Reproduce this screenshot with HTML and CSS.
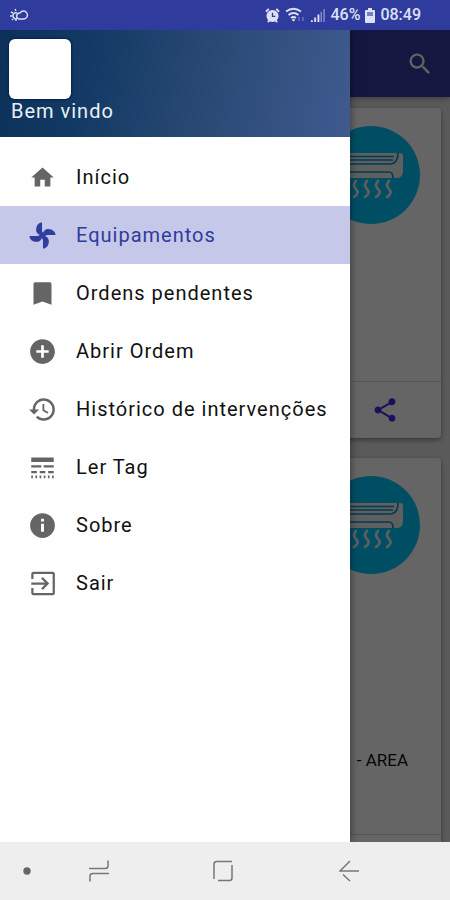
FILE: index.html
```html
<!DOCTYPE html>
<html lang="pt">
<head>
<meta charset="utf-8">
<meta name="viewport" content="width=device-width, initial-scale=1">
<title>Equipamentos</title>
<link rel="stylesheet" href="styles.css">
</head>
<body>
<svg class="defs" aria-hidden="true">
  <symbol id="aircon" viewBox="0 0 98 98">
    <circle cx="49" cy="49" r="49" fill="#00c3fa"/>
    <path d="M16 27H78Q81 27 81 30V45Q81 52 75 52H22Q16 52 16 46Z" fill="#ededed"/>
    <path d="M16 30.500H72M16 34H71M16 38H69Q76 37 76 27M16 46H67Q71 46 71 52" fill="none" stroke="#0098c8" stroke-width="1.700"/>
    <path d="M32 55q-4 4 0 8t-2 8M43 55q-4 4 0 8t-2 8M54 55q-4 4 0 8t-2 8M65 55q-4 4 0 8t-2 8" transform="translate(2 0)" fill="none" stroke="#ededed" stroke-width="2.600" stroke-linecap="round"/>
  </symbol>
</svg>
<div class="screen">
  <div class="status">
    <svg class="weather" viewBox="0 0 20 14" fill="none" stroke="currentColor" stroke-width="1.400">
      <path d="M8 10.500a3 3 0 0 1 2-5.500a4 4 0 1 1 4 6H8"/><path d="M7 5a3 3 0 1 0 1 5M1 4l2 1M0 8h2M2 12l1-1M6 13v-2M5 1l1 2"/>
    </svg>
    <div class="indicators">
      <svg class="alarm" viewBox="0 0 16 16"><circle cx="8" cy="8.500" r="6.500" fill="currentColor"/><path d="M1 4l3-3M15 4l-3-3M3 15l2-2M13 15l-2-2" stroke="currentColor" stroke-width="2"/><path d="M8 5v4h3" fill="none" stroke="#303b9e" stroke-width="1.400"/></svg>
      <svg class="wifi" viewBox="0 0 20 16"><path d="M1 4.500Q8.500-1 16 4.500M3.500 8Q8.500 4 13.500 8M6 11Q8.500 9 11 11" fill="none" stroke="currentColor" stroke-width="1.800"/><circle cx="8.500" cy="13" r="1.300" fill="currentColor"/><path d="M14 10v4M18 10v4" stroke="currentColor" opacity=".5"/></svg>
      <svg class="signal" viewBox="0 0 16 16"><path d="M2 15v-2M5.500 15v-5M9 15V7" stroke="currentColor" stroke-width="2"/><path d="M12 15V4M15 15V1" stroke="currentColor" stroke-width="1.500" opacity=".5"/></svg>
      <span>46%</span>
      <svg class="battery" viewBox="0 0 10 15"><path d="M3 0h4v2h2q1 0 1 1v11q0 1-1 1H1q-1 0-1-1V3q0-1 1-1h2z" fill="currentColor"/><path d="M2 4h6v4H2z" fill="#7880c4"/></svg>
      <span>08:49</span>
    </div>
  </div>

  <div class="stage">
    <main class="page">
      <header class="toolbar">
        <button class="icon-button" type="button" aria-label="Pesquisar">
          <svg viewBox="0 0 24 24"><path d="M15.500 14h-.79l-.28-.27A6.471 6.471 0 0 0 16 9.500 6.500 6.500 0 1 0 9.500 16c1.610 0 3.090-.59 4.230-1.570l.27.28v.79l5 4.990L20.490 19l-4.990-5zm-6 0C7.010 14 5 11.990 5 9.500S7.010 5 9.500 5 14 7.010 14 9.500 11.990 14 9.500 14z"/></svg>
        </button>
      </header>
      <div class="cards">
        <article class="card">
          <div class="card-body">
            <svg class="picture" aria-hidden="true"><use href="#aircon"/></svg>
          </div>
          <div class="card-actions">
            <button class="icon-button share" type="button" aria-label="Partilhar">
              <svg viewBox="0 0 24 24"><path d="M18 16.080c-.76 0-1.440.3-1.960.77L8.910 12.700c.05-.23.09-.46.09-.7s-.04-.47-.09-.7l7.050-4.110c.54.5 1.250.81 2.040.81 1.660 0 3-1.340 3-3s-1.340-3-3-3-3 1.340-3 3c0 .24.04.47.09.7L8.040 9.810C7.500 9.310 6.790 9 6 9c-1.660 0-3 1.340-3 3s1.340 3 3 3c.79 0 1.500-.31 2.040-.81l7.120 4.160c-.05.21-.08.43-.08.65 0 1.610 1.310 2.920 2.920 2.920s2.920-1.310 2.920-2.920-1.310-2.920-2.920-2.920z"/></svg>
            </button>
          </div>
        </article>
        <article class="card">
          <div class="card-body tall">
            <svg class="picture" aria-hidden="true"><use href="#aircon"/></svg>
            <p class="place">- AREA</p>
          </div>
          <div class="card-actions"></div>
        </article>
      </div>
    </main>
    <div class="scrim"></div>

    <aside class="drawer">
      <div class="profile">
        <div class="avatar"></div>
        <p class="welcome">Bem vindo</p>
      </div>
      <nav class="menu">
        <a class="item" href="#inicio"><svg viewBox="0 0 24 24"><path d="M10 20v-6h4v6h5v-8h3L12 3 2 12h3v8z"/></svg>Início</a>
        <a class="item active" href="#equipamentos" aria-current="page"><svg class="fan" viewBox="0 0 28 28"><g id="blade"><path d="M14 14C8 13 7 10 7.500 6.500C8 2.500 11 .5 13.500 .5V9.500L16 13Z"/></g><use href="#blade" transform="rotate(90 14 14)"/><use href="#blade" transform="rotate(180 14 14)"/><use href="#blade" transform="rotate(270 14 14)"/></svg>Equipamentos</a>
        <a class="item" href="#pendentes"><svg viewBox="0 0 24 24"><path d="M5.500 2h13q1.500 0 1.500 1.500V22l-8-3-8 3V3.500Q4 2 5.500 2z"/></svg>Ordens pendentes</a>
        <a class="item" href="#abrir"><svg viewBox="0 0 24 24"><path d="M12 1C5.900 1 1 5.900 1 12s4.900 11 11 11 11-4.900 11-11S18.100 1 12 1zm5.500 12.200h-4.300v4.300h-2.400v-4.300H6.500v-2.400h4.300V6.500h2.400v4.300h4.300z"/></svg>Abrir Ordem</a>
        <a class="item" href="#historico"><svg viewBox="0 0 24 24"><path d="M13 2C7.700 2 3.300 6.400 3.300 12H0l4.500 4.500L9 12H5.500c0-4.300 3.400-7.800 7.500-7.800s7.800 3.500 7.800 7.800-3.500 7.800-7.800 7.800c-2.100 0-3.900-.9-5.300-2.200l-1.500 1.500A9.800 9.800 0 0 0 13 22a10 10 0 0 0 0-20zm-1 5v6l4.500 2.700.8-1.300-3.700-2.200V7z"/></svg>Histórico de intervenções</a>
        <a class="item" href="#tag"><svg viewBox="0 0 24 24"><path d="M2 3h20v4H2zM2 10h9v2H2zM13 10h9v2h-9zM2 15h5v2H2zM9.500 15h5v2h-5zM17 15h5v2h-5zM2 19h1.500v2.500H2zM5.700 19h1.500v2.500H5.700zM9.400 19h1.500v2.500H9.400zM13.100 19h1.500v2.500h-1.500zM16.800 19h1.500v2.500h-1.500zM20.500 19H22v2.500h-1.500z"/></svg>Ler Tag</a>
        <a class="item" href="#sobre"><svg viewBox="0 0 24 24"><path d="M12 1a11 11 0 1 0 0 22 11 11 0 0 0 0-22zm1.300 16.500h-2.600v-7h2.600zm0-9h-2.600V6h2.600z"/></svg>Sobre</a>
        <a class="item" href="#sair"><svg viewBox="0 0 24 24" class="line"><path d="M3 8V3.500q0-1 1-1h17q1 0 1 1v17q0 1-1 1H4q-1 0-1-1V16M2 12h14M11.500 7l5 5-5 5"/></svg>Sair</a>
      </nav>
    </aside>
  </div>

  <footer class="system">
    <button type="button" aria-label="Ocultar barra"><svg viewBox="0 0 8 8"><circle class="dot" cx="4" cy="4" r="3.700"/></svg></button>
    <button type="button" aria-label="Recentes"><svg viewBox="0 0 20 22"><path d="M0 8.500H16Q19 8.500 19 6V.5M20 13.500H4Q1 13.500 1 16v5.500"/></svg></button>
    <button type="button" aria-label="Tela inicial"><svg viewBox="0 0 20 22"><path d="M1 19V4Q1 1.500 4 1.500H19M19 5V18Q19 20.500 16.500 20.500H5"/></svg></button>
    <button type="button" aria-label="Voltar"><svg viewBox="0 0 20 22"><path d="M20 11H1L11 1M4 14.500L11 21"/></svg></button>
  </footer>
</div>
</body>
</html>
```
FILE: styles.css
```css
* {
  box-sizing: border-box;
}

body {
  margin: 0;
  font-family: Roboto, "Liberation Sans", sans-serif;
  color: #111;
}

p {
  margin: 0;
}

button {
  padding: 0;
  border: 0;
  background: none;
}

svg {
  display: block;
}

.defs {
  position: absolute;
  width: 0;
  height: 0;
}

.screen {
  display: flex;
  flex-direction: column;
  height: 100vh;
}

/* Status bar */
.status {
  flex: none;
  display: flex;
  align-items: center;
  justify-content: space-between;
  height: 30px;
  padding: 0 29px 0 10px;
  background: #303b9e;
  color: #dde0f6;
  font-size: 16px;
  font-weight: 500;
  line-height: 30px;
}

.weather {
  width: 20px;
  height: 14px;
}

.indicators {
  display: flex;
  align-items: center;
  gap: 5px;
}

.alarm,
.signal {
  width: 15px;
  height: 15px;
}

.wifi {
  width: 20px;
  height: 16px;
}

.battery {
  width: 10px;
  height: 15px;
}

/* Page under the drawer */
.stage {
  position: relative;
  flex: 1;
  min-height: 0;
  overflow: hidden;
}

.page {
  height: 100%;
  overflow: hidden;
  background: #e2e2e2;
}

.toolbar {
  display: flex;
  align-items: center;
  justify-content: flex-end;
  height: 67px;
  padding-right: 16px;
  background: #333a9e;
  box-shadow: 0 2px 6px rgba(0, 0, 0, 0.3);
}

.icon-button svg {
  width: 28px;
  height: 28px;
  fill: #f4f4f4;
}

.cards {
  display: grid;
  gap: 20px;
  padding: 11px 9px;
}

.card {
  border-radius: 4px;
  background: #fcfcfc;
  box-shadow: 0 2px 5px rgba(0, 0, 0, 0.4);
}

.card-body {
  display: flex;
  flex-direction: column;
  justify-content: space-between;
  align-items: flex-end;
  min-height: 273px;
  padding: 18px 21px;
}

.card-body.tall {
  min-height: 376px;
  padding-bottom: 64px;
}

.picture {
  width: 98px;
  height: 98px;
}

.place {
  padding-right: 12px;
  font-size: 17px;
  line-height: 20px;
}

.card-actions {
  display: flex;
  align-items: center;
  justify-content: flex-end;
  height: 57px;
  padding-right: 42px;
  border-top: 1px solid #d8d8d8;
}

.share svg {
  fill: #4c24e6;
}

.scrim {
  position: absolute;
  inset: 0;
  background: rgba(0, 0, 0, 0.6);
}

/* Navigation drawer */
.drawer {
  position: absolute;
  inset: 0 auto 0 0;
  width: 350px;
  max-width: 85%;
  background: #fff;
  box-shadow: 0 0 8px rgba(0, 0, 0, 0.5);
}

.profile {
  height: 107px;
  padding: 9px;
  background: linear-gradient(100deg, #0c3159 0%, #123a64 25%, #2a4a75 60%, #405a90 100%);
}

.avatar {
  width: 62px;
  height: 60px;
  border-radius: 6px;
  background: #fff;
  box-shadow: 0 0 2px 1px #08204e;
}

.welcome {
  padding-left: 2px;
  color: #e9f0f5;
  font-size: 20px;
  line-height: 24px;
  letter-spacing: 1px;
}

.menu {
  padding-top: 11px;
}

.item {
  display: flex;
  align-items: center;
  gap: 20px;
  height: 58px;
  padding-left: 29px;
  color: #111;
  font-size: 20px;
  letter-spacing: 1px;
  text-decoration: none;
}

.item svg {
  width: 27px;
  height: 27px;
  fill: #656565;
}

.item .line {
  fill: none;
  stroke: #656565;
  stroke-width: 2;
}

.item.active {
  background: #c6c8e9;
  color: #303b9e;
}

.item .fan {
  fill: #303f9f;
}

/* System navigation */
.system {
  flex: none;
  display: grid;
  grid-template-columns: 12% 20% 35% 21% 12%;
  align-items: center;
  height: 58px;
  background: #eee;
}

.system button {
  display: flex;
  justify-content: center;
}

.system svg {
  width: 20px;
  height: 22px;
  fill: none;
  stroke: #777;
  stroke-width: 1.5;
}

.system button:first-child svg {
  width: 8px;
  height: 8px;
}

.system .dot {
  fill: #666;
  stroke: none;
}
```
